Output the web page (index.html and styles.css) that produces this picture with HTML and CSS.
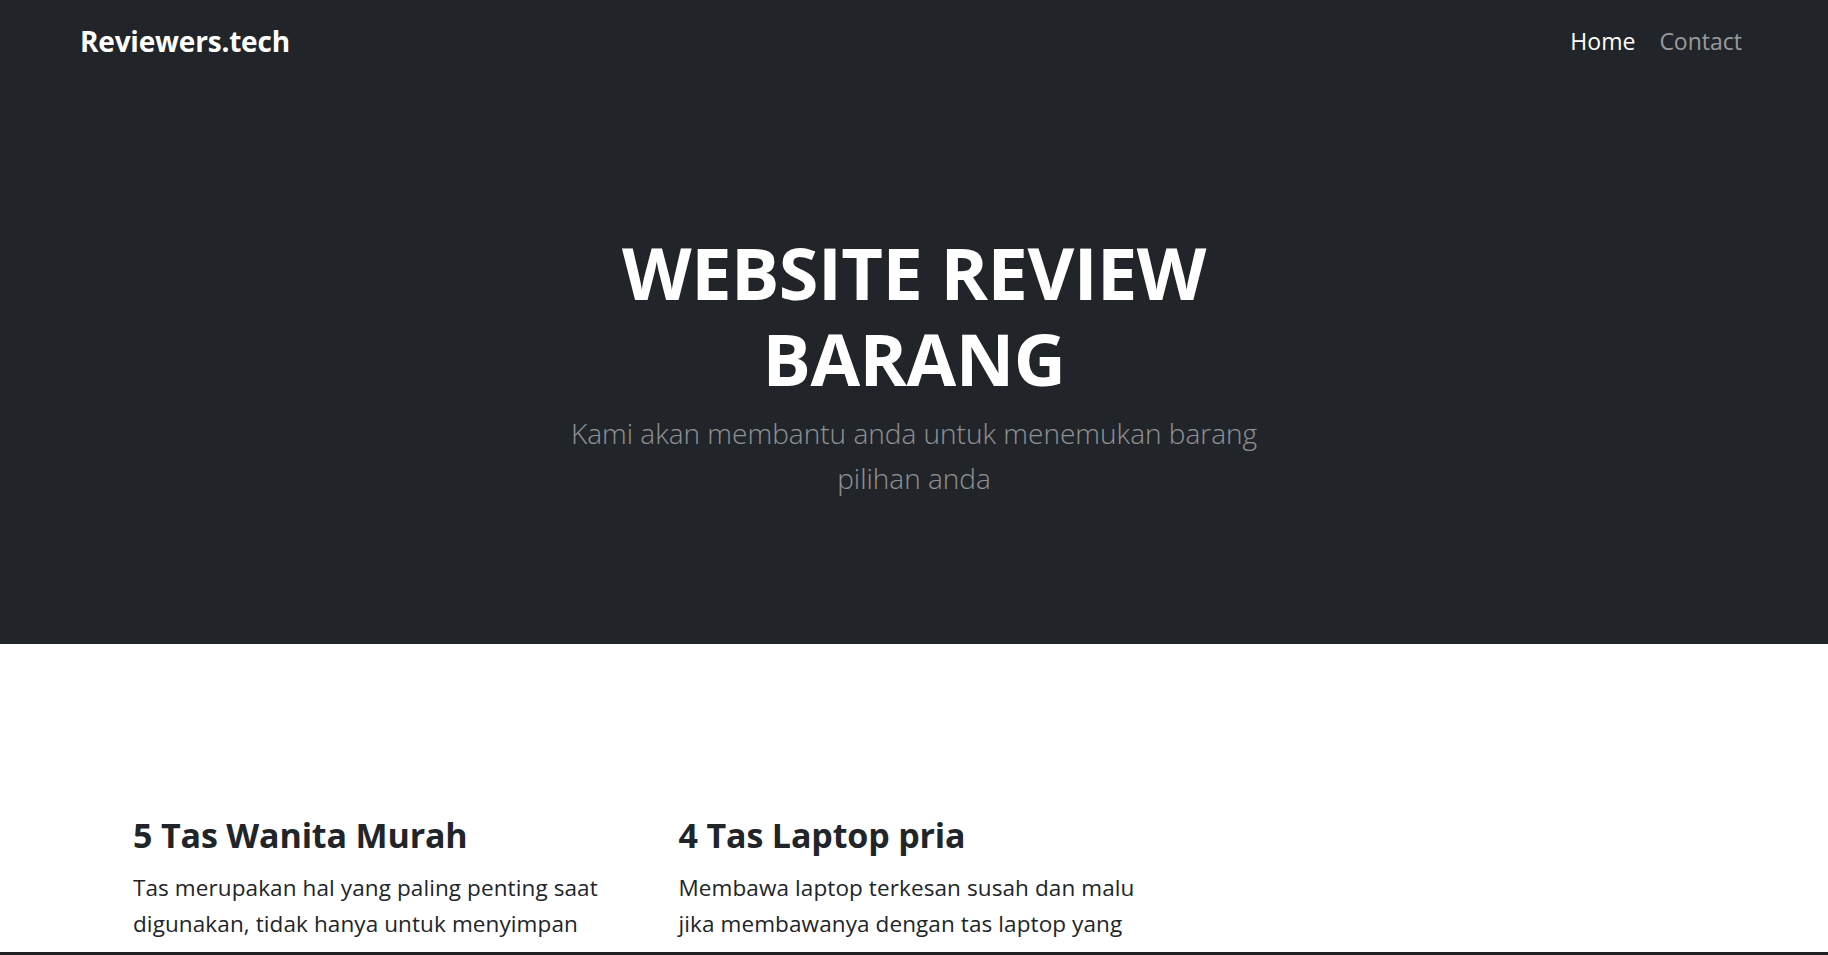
FILE: index.html
```html
<!DOCTYPE html>
<html lang="id">
<head>
<meta charset="utf-8">
<title>Reviewers.tech</title>
<link rel="stylesheet" href="styles.css">
</head>
<body>
<div class="dark">
  <nav class="navbar">
    <a class="brand" href="#">Reviewers.tech</a>
    <ul class="nav">
      <li><a class="nav-link active" href="#">Home</a></li>
      <li><a class="nav-link" href="#">Contact</a></li>
    </ul>
  </nav>
  <header class="hero">
    <h1 class="hero-title">WEBSITE REVIEW BARANG</h1>
    <p class="lead">Kami akan membantu anda untuk menemukan barang pilihan anda</p>
  </header>
</div>
<main class="features">
  <article class="feature">
    <h3>5 Tas Wanita Murah</h3>
    <p>Tas merupakan hal yang paling penting saat digunakan, tidak hanya untuk menyimpan barang-barang tetapi juga sebagai penunjang penampilan.</p>
  </article>
  <article class="feature">
    <h3>4 Tas Laptop pria</h3>
    <p>Membawa laptop terkesan susah dan malu jika membawanya dengan tas laptop yang dibuat asal saja, maka lihatlah ini 4 tas laptop pria terbaik.</p>
  </article>
  <article class="feature"></article>
</main>
<div class="bottom-bar"></div>
</body>
</html>
```
FILE: styles.css
```css
* { box-sizing: border-box; }
html, body { margin: 0; padding: 0; }
body {
  font-family: "Open Sans", "Noto Sans", "DejaVu Sans", sans-serif;
  color: #212529;
  background: #fff;
  overflow: hidden;
}
.dark {
  background: #212529;
  color: #fff;
}
.navbar {
  display: flex;
  align-items: center;
  justify-content: space-between;
  padding: 12px 74px 12px 80px;
}
.brand {
  font-size: 28px;
  font-weight: 700;
  line-height: 45px;
  padding: 7px 0 5px;
  color: #fff;
  text-decoration: none;
  letter-spacing: -0.2px;
}
.nav {
  display: flex;
  list-style: none;
  margin: 0;
  padding: 0;
}
.nav-link {
  display: block;
  font-size: 23px;
  line-height: 36px;
  padding: 0 12px;
  color: rgba(255,255,255,.55);
  text-decoration: none;
}
.nav-link.active { color: #fff; }
.hero {
  padding: 148px 0 143px;
  text-align: center;
}
.hero-title {
  margin: 0 auto 9px;
  max-width: 720px;
  font-size: 72px;
  font-weight: 700;
  line-height: 86.4px;
  letter-spacing: -0.5px;
}
.lead {
  margin: 0 auto;
  max-width: 720px;
  font-size: 28px;
  font-weight: 300;
  line-height: 45px;
  color: rgba(255,255,255,.5);
}
.features {
  display: grid;
  grid-template-columns: repeat(3, 480px);
  column-gap: 65.5px;
  padding: 170px 0 0 133px;
}
.feature h3 {
  margin: 0 0 13px;
  font-size: 34px;
  font-weight: 700;
  line-height: 43px;
  letter-spacing: -0.15px;
}
.feature p {
  margin: 0;
  font-size: 22.5px;
  line-height: 36px;
  letter-spacing: 0.1px;
}
.bottom-bar {
  position: fixed;
  left: 0;
  right: 0;
  bottom: 0;
  height: 3px;
  background: #1f2225;
}
```
